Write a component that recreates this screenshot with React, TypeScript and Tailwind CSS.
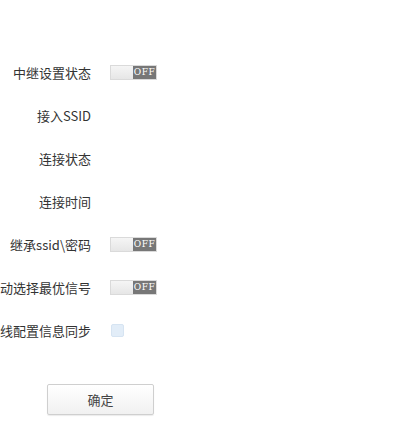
import React from "react"

const rows: { label: string; kind: "toggle" | "text" | "check" }[] = [
  { label: "中继设置状态", kind: "toggle" },
  { label: "接入SSID", kind: "text" },
  { label: "连接状态", kind: "text" },
  { label: "连接时间", kind: "text" },
  { label: "继承ssid\\密码", kind: "toggle" },
  { label: "自动选择最优信号", kind: "toggle" },
  { label: "无线配置信息同步", kind: "check" },
]

function OffSwitch() {
  return (
    <div className="flex h-[15px] w-[47px] border border-[#dadada]">
      <div className="w-[22px] bg-gradient-to-b from-[#f5f5f5] to-[#e6e6e6]" />
      <div className="flex flex-1 items-center justify-center bg-[#777] text-[9px] leading-none tracking-[0.5px] text-white [font-family:'DejaVu_Serif',serif]">
        OFF
      </div>
    </div>
  )
}

export default function App() {
  return (
    <div className="h-[431px] w-[400px] overflow-hidden bg-white text-[13px] text-[#333] [font-family:'Noto_Sans_CJK_SC','Liberation_Sans',sans-serif]">
      <div className="pt-[51px]">
        {rows.map((r) => (
          <div key={r.label} className="flex h-[43px] items-center">
            <div className="flex w-[91px] shrink-0 justify-end">
              <span className="shrink-0 whitespace-nowrap">{r.label}</span>
            </div>
            <div className="ml-[19px] flex items-center">
              {r.kind === "toggle" && <OffSwitch />}
              {r.kind === "check" && (
                <div className="ml-[1px] h-[13px] w-[13px] rounded-[2px] border border-[#d6e4f2] bg-[#e2edf8]" />
              )}
            </div>
          </div>
        ))}
      </div>
      <div className="ml-[47px] mt-[32px]">
        <button className="h-[31px] w-[107px] rounded-[2px] border border-[#cfcfcf] bg-gradient-to-b from-white to-[#f1f1f1] text-[13px] text-[#444] shadow-[0_1px_1px_rgba(0,0,0,0.08)]">
          确定
        </button>
      </div>
    </div>
  )
}
